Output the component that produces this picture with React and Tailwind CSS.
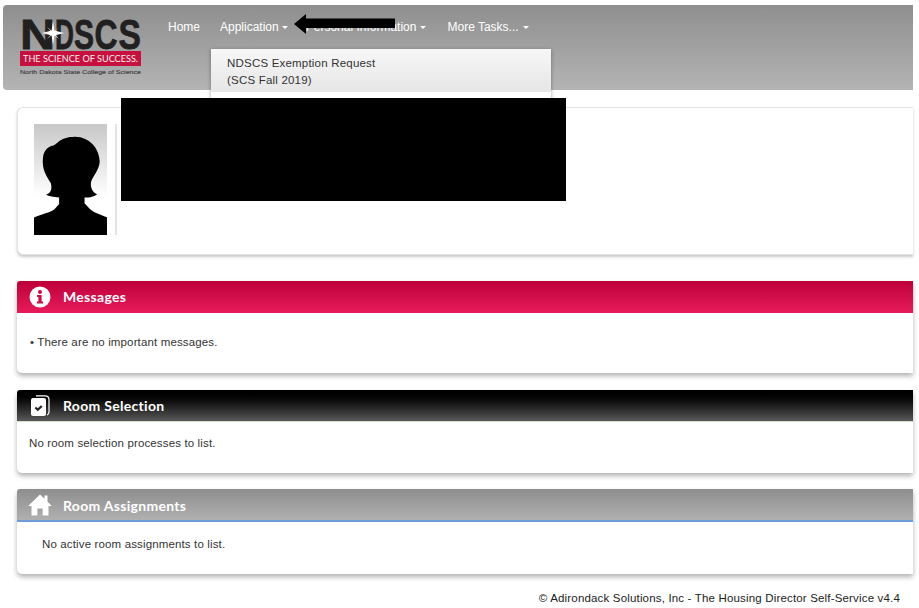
import React from "react";

const Caret = ({ className = "ml-1" }) => (
  <span className={`inline-block align-middle w-0 h-0 border-x-[3px] border-x-transparent border-t-[3px] border-t-white ${className}`} />
);

// logo letters have different widths in the original, so each one is stretched by hand
const logoLetters = [
  { ch: "N", x: 1, sx: 1.13 },
  { ch: "D", x: 36, sx: 0.61 },
  { ch: "S", x: 55, sx: 0.7 },
  { ch: "C", x: 75.5, sx: 0.74 },
  { ch: "S", x: 99.5, sx: 0.78 },
];

function Logo() {
  return (
    <svg width="124" height="60" viewBox="0 0 124 60" className="shrink-0 overflow-visible">
      {logoLetters.map((l, i) => (
        <text
          key={i}
          transform={`translate(${l.x} 31) scale(${l.sx} 1)`}
          fontFamily="Liberation Sans"
          fontWeight="700"
          fontSize="43"
          fill="#221f20"
          stroke="#221f20"
          strokeWidth="0.8"
        >
          {l.ch}
        </text>
      ))}
      <path d="M34 3 L35.4 12.6 L45 15 L35.4 17.4 L34 27 L32.6 17.4 L23 15 L32.6 12.6 Z" fill="#fff" />
      <path d="M28 9 L34.6 14.4 L40 9 L35 15 L40 21 L34 16 L28 21 L33.4 15 Z" fill="#fff" />
      <rect x="1" y="33" width="121" height="15" fill="#c8103f" />
      <text x="4" y="44" fontFamily="Lato" fontSize="9.5" textLength="115" lengthAdjust="spacingAndGlyphs" fill="#f0f0f0">
        THE SCIENCE OF SUCCESS.
      </text>
      <text x="1" y="56" fontFamily="Liberation Sans" fontSize="5.8" textLength="121" lengthAdjust="spacingAndGlyphs" stroke="#444" strokeWidth="0.15" fill="#444">
        North Dakota State College of Science
      </text>
    </svg>
  );
}

function Navbar() {
  return (
    <header className="relative ml-[3px] h-[85px] rounded-l-[4px] bg-gradient-to-b from-[#8f8f8f] to-[#b4b4b4] flex">
      <div className="ml-[16px] mt-[13px]">
        <Logo />
      </div>
      <nav className="ml-[25px] mt-[15px] flex h-[14px] items-center text-[12px] text-white">
        <a className="mr-[20px]">Home</a>
        <a className="mr-[18px]">
          Application
          <Caret className="ml-[3px]" />
        </a>
        <a className="mr-[21px]">
          Personal Information
          <Caret />
        </a>
        <a>
          More Tasks...
          <Caret />
        </a>
      </nav>

      {/* Application dropdown */}
      <div className="absolute left-[208px] top-[44px] w-[340px] h-[60px] bg-white shadow-[0_1px_4px_rgba(0,0,0,0.35)] z-10">
        <div className="h-[43px] bg-gradient-to-b from-[#f7f7f7] to-[#e6e6e6] pl-[16px] pt-[6px] text-[11.5px] leading-[17px] text-[#333] tracking-[0.2px]">
          NDSCS Exemption Request
          <br />
          (SCS Fall 2019)
        </div>
      </div>
    </header>
  );
}

function Panel({ title, icon, headClass, titleClass, bodyClass, children }) {
  return (
    <section className="ml-[17px] rounded-l-[5px] bg-white shadow-[0_3px_5px_rgba(0,0,0,0.3)]">
      <div className={`flex items-center rounded-tl-[3px] ${headClass}`}>
        <span className="w-[46px] flex justify-center">{icon}</span>
        <h2 className={`text-[14px] font-bold text-white tracking-[0.3px] ${titleClass}`} style={{ fontFamily: "Lato, sans-serif" }}>
          {title}
        </h2>
      </div>
      <div className={bodyClass}>{children}</div>
    </section>
  );
}

const InfoIcon = () => (
  <svg width="22" height="22" viewBox="0 0 22 22">
    <circle cx="11" cy="11" r="10.5" fill="#fff" />
    <circle cx="11" cy="6" r="2" fill="#d10a46" />
    <path d="M8 9 H12.6 V15.4 H14 V17.4 H8 V15.4 H9.4 V11 H8 Z" fill="#d10a46" />
  </svg>
);

const CheckIcon = () => (
  <svg width="20" height="21" viewBox="0 0 20 21">
    <path d="M6 0.8 H15 Q19 0.8 19 4.5 V17 Q19 19.5 17 20" fill="none" stroke="#fff" strokeWidth="1.2" />
    <rect x="1" y="3" width="15" height="18" rx="2" fill="#fff" />
    <path d="M5.4 12.5 L7.8 14.8 L11.8 11" fill="none" stroke="#222" strokeWidth="2.2" />
  </svg>
);

const HomeIcon = () => (
  <svg width="24" height="22" viewBox="0 0 24 22">
    <path d="M12 0.5 L16.5 4.8 V1.5 H19.5 V7.7 L23.8 12 H20.5 V21.5 H14.6 V14.5 H9.4 V21.5 H3.5 V12 H0.2 Z" fill="#fff" />
  </svg>
);

function App() {
  return (
    <div
      className="relative w-[919px] h-[608px] overflow-hidden bg-white"
      style={{ fontFamily: '"Liberation Sans", Arial, sans-serif' }}
    >
      <div className="w-[913px] pt-[5px]">
        <Navbar />

        {/* Profile card */}
        <section className="ml-[17px] mt-[17px] h-[148px] rounded-l-[6px] border border-r-0 border-[#e2e2e2] bg-white shadow-[0_2px_3px_rgba(0,0,0,0.22)] pl-[16px] pt-[16px] flex">
          <div className="w-[73px] h-[111px] bg-gradient-to-b from-[#c8c8c8] to-white to-[65%]">
            <svg viewBox="101 73 221 332" className="w-full h-full" preserveAspectRatio="none">
              <path
                d="M101 405 V353 C125 342 150 338 163 328 L177 312 V293 C160 290 145 290 138 284 C150 280 157 270 152 250 C135 225 125 205 128 175 C130 155 140 140 160 137 C175 130 180 112 225 111 C270 112 298 145 300 185 C298 210 282 225 274 245 C270 265 280 278 292 283 C285 290 270 293 254 293 V310 L268 325 C280 338 305 345 322 352 V405 Z"
                fill="#000"
              />
            </svg>
          </div>
          <div className="ml-[8px] w-[2px] h-[111px] bg-[#e4e4e4]" />
        </section>

        <div className="mt-[26px] flex flex-col gap-[17px]">
          <Panel
            title="Messages"
            icon={<InfoIcon />}
            headClass="h-[32px] bg-gradient-to-b from-[#bd0039] to-[#e81a5b]"
            titleClass="-mt-[2px]"
            bodyClass="h-[60px] pl-[13px] pt-[22px] text-[11.5px] leading-[14px] text-[#333] tracking-[0.14px]"
          >
            • There are no important messages.
          </Panel>
          <Panel
            title="Room Selection"
            icon={<CheckIcon />}
            headClass="h-[32px] bg-gradient-to-b from-black to-[#5a5a5a] border-b border-[#cfe0c8]"
            titleClass="-mt-[1px]"
            bodyClass="h-[51px] pl-[12px] pt-[14px] text-[11.5px] leading-[14px] text-[#333] tracking-[0.14px]"
          >
            No room selection processes to list.
          </Panel>
          <div className="-mt-[1px]">
            <Panel
              title="Room Assignments"
              icon={<HomeIcon />}
              headClass="h-[33px] bg-gradient-to-b from-[#8e8e8e] to-[#b0b0b0] border-b-2 border-[#6f9bd8]"
              titleClass="pt-[2px]"
              bodyClass="h-[52px] pl-[25px] pt-[15px] text-[11.5px] leading-[14px] text-[#333] tracking-[0.14px]"
            >
              No active room assignments to list.
            </Panel>
          </div>
        </div>

        <footer className="mt-[17px] pr-[13px] text-right text-[11.5px] leading-[14px] text-[#222] tracking-[0.17px]">
          © Adirondack Solutions, Inc - The Housing Director Self-Service v4.4
        </footer>
      </div>

      {/* Redaction and annotation arrow laid over the screenshot */}
      <div className="absolute left-[121px] top-[98px] w-[445px] h-[103px] bg-black z-20" />
      <svg className="absolute left-[293px] top-[13px] z-20" width="104" height="22" viewBox="0 0 104 22">
        <path d="M1 11 L13 1 V5.5 H102 V15 H13 V21 Z" fill="#000" />
      </svg>
    </div>
  );
}

export default App;
